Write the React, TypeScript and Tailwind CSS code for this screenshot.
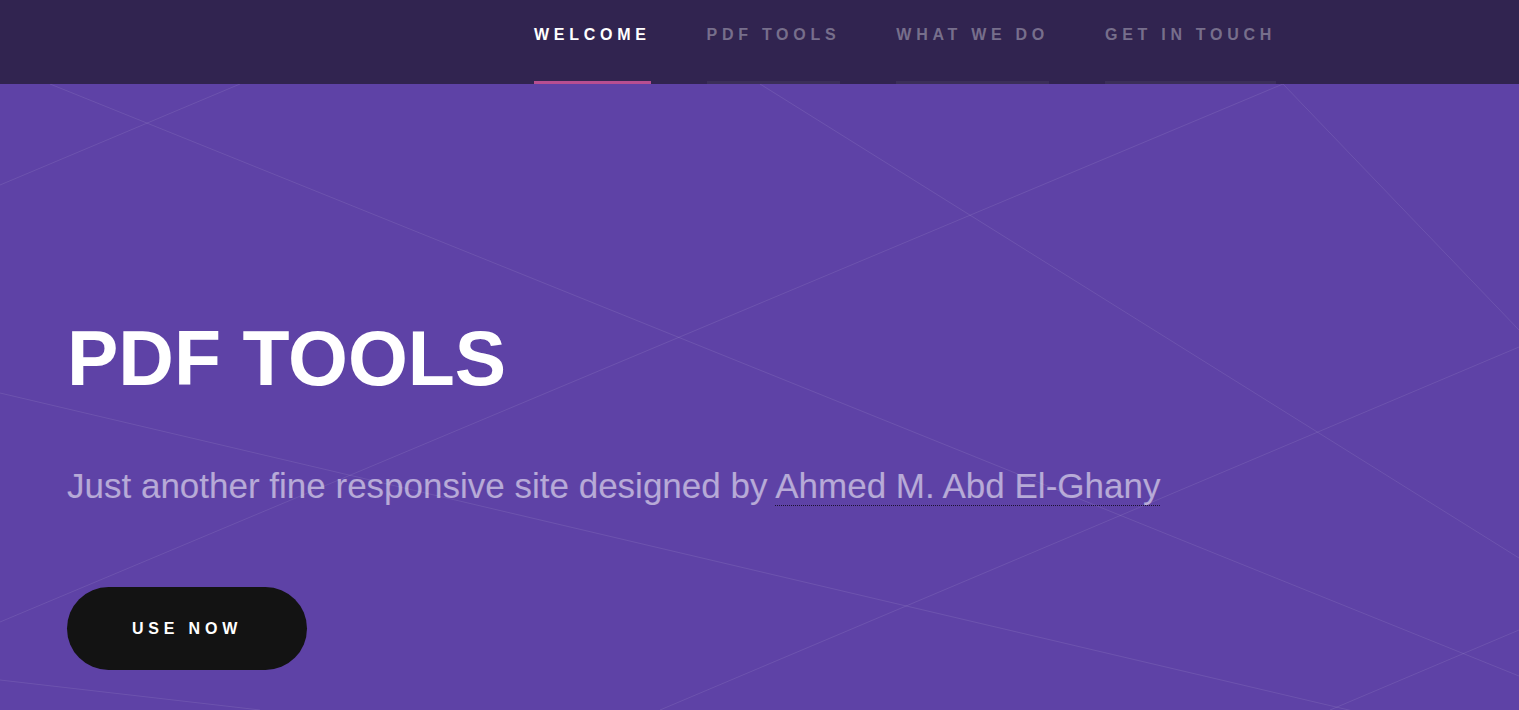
export default function App() {
  const items = ["WELCOME", "PDF TOOLS", "WHAT WE DO", "GET IN TOUCH"];
  return (
    <div className="min-h-screen bg-[#5e42a6] font-['Liberation_Sans',Arial,sans-serif]">
      <header className="flex h-[84px] gap-[56px] bg-[#312450] pl-[534px]">
        {items.map((t, i) => (
          <a
            key={t}
            href="#"
            className={
              i === 0
                ? "relative block h-full pt-[26px] text-[16px] leading-[18px] font-bold tracking-[4.72px] text-white"
                : "relative block h-full pt-[26px] text-[16px] leading-[18px] font-bold tracking-[4.72px] text-white/35"
            }
          >
            {t}
            <span
              className={
                i === 0
                  ? "absolute bottom-0 left-0 right-0 h-[3px] bg-[#b74e91]"
                  : "absolute bottom-0 left-0 right-0 h-[3px] bg-white/5"
              }
            />
          </a>
        ))}
      </header>
      <section className="relative h-[626px] overflow-hidden bg-[#5e42a6]">
        <svg
          className="absolute inset-0 h-full w-full"
          viewBox="0 0 1519 626"
          preserveAspectRatio="none"
          fill="none"
          stroke="rgba(255,255,255,0.09)"
          strokeWidth="1"
        >
          <line x1="0" y1="101" x2="240" y2="0" />
          <line x1="50" y1="0" x2="1519" y2="592" />
          <line x1="760" y1="0" x2="1519" y2="474" />
          <line x1="1283" y1="0" x2="0" y2="538" />
          <line x1="1283" y1="0" x2="1519" y2="246" />
          <line x1="0" y1="309" x2="1519" y2="666" />
          <line x1="1519" y1="263" x2="660" y2="626" />
          <line x1="1519" y1="546" x2="1330" y2="626" />
          <line x1="0" y1="596" x2="260" y2="626" />
        </svg>
        <div className="relative z-10 flex flex-col items-start pl-[67px] pt-[236px]">
          <h1 className="text-[77px] leading-[76px] font-bold text-white">PDF TOOLS</h1>
          <p className="mt-[69px] text-[35px] leading-[42px] text-white/55">
            Just another fine responsive site designed by{" "}
            <a href="#" className="border-b border-dotted border-black/70">
              Ahmed M. Abd El-Ghany
            </a>
          </p>
          <a
            href="#"
            className="mt-[80px] inline-flex h-[83px] items-center rounded-full bg-[#131313] px-[65px] text-[16px] font-bold tracking-[0.3em] text-white"
          >
            USE NOW
          </a>
        </div>
      </section>
    </div>
  );
}
